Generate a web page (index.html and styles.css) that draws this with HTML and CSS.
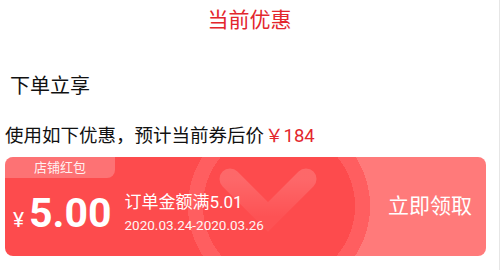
FILE: index.html
```html
<!DOCTYPE html>
<html lang="zh-CN">
<head>
  <meta charset="UTF-8">
  <meta name="viewport" content="width=device-width, initial-scale=1.0">
  <title>当前优惠</title>
  <link rel="stylesheet" href="styles.css">
</head>
<body>
  <div class="panel">
    <div class="title">当前优惠</div>

    <div class="subtitle">下单立享</div>
    <div class="summary">使用如下优惠，预计当前券后价<span class="price">￥184</span></div>

    <!-- Coupon -->
    <div class="coupon">
      <svg class="watermark" width="120" height="99" viewBox="0 0 120 99">
        <defs>
          <linearGradient id="fade" x1="0" y1="0" x2="0" y2="1">
            <stop offset="0" stop-color="#fff" stop-opacity="0.16"/>
            <stop offset="1" stop-color="#fff" stop-opacity="0.04"/>
          </linearGradient>
        </defs>
        <g stroke="url(#fade)" stroke-linecap="round" fill="none">
          <path d="M20 22 L58 60 L96 22" stroke-width="21"/>
          <path d="M58 60 V130" stroke-width="22"/>
          <path d="M32 74 H88" stroke-width="14"/>
        </g>
      </svg>
      <div class="tag">店铺红包</div>
      <div class="coupon-main">
        <span class="yen">¥</span>
        <span class="amount">5.00</span>
        <div class="info">
          <div class="cond">订单金额满5.01</div>
          <div class="date">2020.03.24-2020.03.26</div>
        </div>
      </div>
      <div class="get">立即领取</div>
    </div>
  </div>
</body>
</html>
```

FILE: styles.css
```css
body {
  margin: 0;
  padding: 0;
  background-color: #fff;
  color: #111;
  font-family: Roboto, "Noto Sans CJK SC", sans-serif;
}

.panel {
  height: 270px;
  border-right: 1px solid #e6e6e6;
  box-sizing: border-box;
}

.title {
  height: 40px;
  line-height: 40px;
  text-align: center;
  font-size: 21px;
  color: #e3262d;
}

.subtitle {
  margin-top: 26px;
  padding-left: 10px;
  font-size: 20px;
  line-height: 40px;
}

.summary {
  margin-top: 15px;
  padding-left: 5px;
  font-size: 18.5px;
  line-height: 30px;
}

.price {
  color: #e3262d;
  margin-left: 1px;
}

.coupon {
  position: relative;
  overflow: hidden;
  display: flex;
  align-items: center;
  margin: 6px 13px 0 5px;
  height: 99px;
  border-radius: 8px;
  color: #fff;
  background:
    radial-gradient(circle at 274px 49px, #fd4b4d 0 76px, #ff5e60 76px 91px, transparent 91px),
    linear-gradient(to right, #fd4b4d 274px, #ff7a7a 274px);
}

.watermark {
  position: absolute;
  left: 205px;
  top: 0;
}

.tag {
  position: absolute;
  left: 0;
  top: 0;
  width: 110px;
  height: 21px;
  line-height: 21px;
  text-align: center;
  font-size: 13px;
  color: rgba(255, 255, 255, 0.92);
  background-color: rgba(255, 255, 255, 0.22);
  border-bottom-right-radius: 8px;
}

.coupon-main {
  position: relative;
  display: flex;
  align-items: center;
  padding: 12px 0 0 8px;
}

.yen {
  font-size: 21px;
  align-self: flex-end;
  line-height: 22px;
  margin-bottom: 4px;
}

.amount {
  font-size: 41px;
  font-weight: bold;
  line-height: 44px;
  margin-left: 5px;
}

.info {
  margin-left: 13px;
}

.cond {
  font-size: 17px;
  line-height: 22px;
}

.date {
  margin-top: 2px;
  font-size: 13.5px;
  line-height: 20px;
  opacity: 0.95;
}

.get {
  position: relative;
  margin-left: auto;
  padding: 0 14px 6px 0;
  font-size: 21px;
}
```
